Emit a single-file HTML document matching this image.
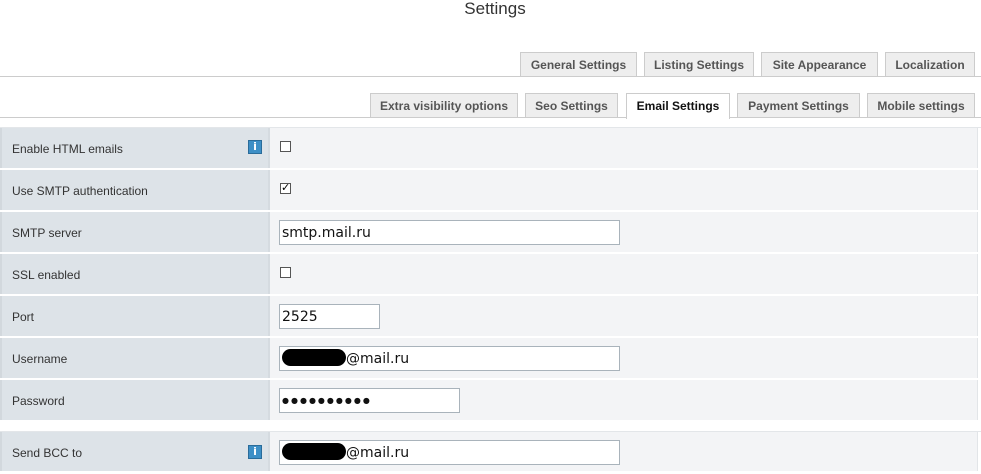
<!DOCTYPE html>
<html><head><style>
body{margin:0;width:981px;height:471px;background:#fff;position:relative;overflow:hidden;font-family:"Liberation Sans",sans-serif}
.t{position:absolute;text-align:center;font-size:17px;color:#333;left:0;width:990px;top:-1px}
.line{position:absolute;left:0;width:981px;height:1px;background:#ccc}
.tab{position:absolute;height:24px;line-height:24px;border:1px solid #ccc;border-bottom:none;background:#eee;color:#555;font-weight:bold;font-size:12px;text-align:center;box-sizing:border-box}
.tab.a{background:#fff;color:#111;height:26px;border-color:#ccc}
.lab{position:absolute;left:0;width:268px;height:40px;background:#dde3e8;border-left:2px solid #d2d8dd;box-sizing:border-box;font-size:12px;color:#333;line-height:42px;padding-left:10px}
.val{position:absolute;left:268px;width:710px;height:40px;background:#f3f4f6;border-left:2px solid #d5dbe0;box-sizing:border-box;border-right:1px solid #e2e5e8}
.inp{position:absolute;height:25px;background:#fff;border:1px solid #a9b3bb;box-sizing:border-box;font-family:"DejaVu Sans",sans-serif;font-size:14px;line-height:24px;padding-left:2px;color:#111}
.cb{position:absolute;width:11px;height:11px;border:1px solid #555;background:#fff;box-sizing:border-box;font-size:11px;line-height:9px;text-align:center}
.info{position:absolute;width:14px;height:14px;background:#3d8fc6;border:1px solid #2a6c9a;box-sizing:border-box;color:#fff;font-weight:bold;font-size:11px;line-height:12px;text-align:center;font-family:"DejaVu Sans",sans-serif}
.blob{display:inline-block;width:64px;height:17px;background:#000;border-radius:9px;vertical-align:-3px}
.dots{font-size:8px;letter-spacing:2px;line-height:23px}
</style></head><body>
<div class="t">Settings</div>
<div class="line" style="top:76px"></div>
<div class="tab" style="left:520px;top:52px;width:117px">General Settings</div>
<div class="tab" style="left:644px;top:52px;width:110px">Listing Settings</div>
<div class="tab" style="left:761px;top:52px;width:117px">Site Appearance</div>
<div class="tab" style="left:885px;top:52px;width:90px">Localization</div>
<div class="line" style="top:117px"></div>
<div class="tab" style="left:370px;top:93px;width:148px">Extra visibility options</div>
<div class="tab" style="left:525px;top:93px;width:93px">Seo Settings</div>
<div class="tab a" style="left:626px;top:93px;width:104px">Email Settings</div>
<div class="tab" style="left:737px;top:93px;width:123px">Payment Settings</div>
<div class="tab" style="left:867px;top:93px;width:108px">Mobile settings</div>
<div class="line" style="top:127px;background:#e3e6e9"></div>

<div class="lab" style="top:128px">Enable HTML emails</div><div class="val" style="top:128px"></div>
<div class="info" style="left:248px;top:140px">i</div>
<div class="cb" style="left:280px;top:141px"></div>
<div class="lab" style="top:170px">Use SMTP authentication</div><div class="val" style="top:170px"></div>
<div class="cb" style="left:280px;top:183px">✓</div>
<div class="lab" style="top:212px">SMTP server</div><div class="val" style="top:212px"></div>
<div class="inp" style="left:279px;top:220px;width:341px">smtp.mail.ru</div>
<div class="lab" style="top:254px">SSL enabled</div><div class="val" style="top:254px"></div>
<div class="cb" style="left:280px;top:267px"></div>
<div class="lab" style="top:296px">Port</div><div class="val" style="top:296px"></div>
<div class="inp" style="left:279px;top:304px;width:101px">2525</div>
<div class="lab" style="top:338px">Username</div><div class="val" style="top:338px"></div>
<div class="inp" style="left:279px;top:346px;width:341px"><span class="blob"></span>@mail.ru</div>
<div class="lab" style="top:380px">Password</div><div class="val" style="top:380px"></div>
<div class="inp dots" style="left:279px;top:388px;width:181px">●●●●●●●●●●</div>
<div class="line" style="top:431px;background:#e3e6e9"></div>
<div class="lab" style="top:432px;height:39px">Send BCC to</div><div class="val" style="top:432px;height:39px"></div>
<div class="info" style="left:248px;top:445px">i</div>
<div class="inp" style="left:279px;top:440px;width:341px"><span class="blob"></span>@mail.ru</div>
</body></html>
